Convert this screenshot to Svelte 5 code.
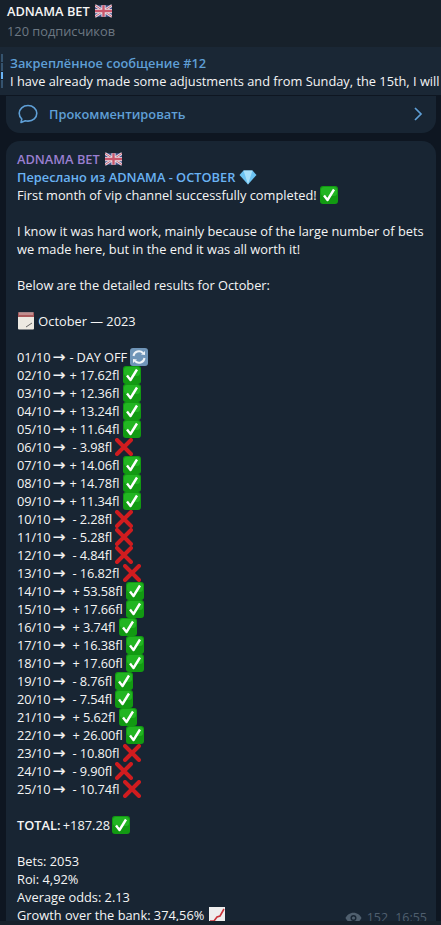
<script>
  const rows = [
    ['01/10', '- DAY OFF', 'sync'],
    ['02/10', '+ 17.62fl', 'ok'],
    ['03/10', '+ 12.36fl', 'ok'],
    ['04/10', '+ 13.24fl', 'ok'],
    ['05/10', '+ 11.64fl', 'ok'],
    ['06/10', ' - 3.98fl', 'no'],
    ['07/10', '+ 14.06fl', 'ok'],
    ['08/10', '+ 14.78fl', 'ok'],
    ['09/10', '+ 11.34fl', 'ok'],
    ['10/10', ' - 2.28fl', 'no'],
    ['11/10', ' - 5.28fl', 'no'],
    ['12/10', ' - 4.84fl', 'no'],
    ['13/10', ' - 16.82fl', 'no'],
    ['14/10', ' + 53.58fl', 'ok'],
    ['15/10', ' + 17.66fl', 'ok'],
    ['16/10', ' + 3.74fl', 'ok'],
    ['17/10', ' + 16.38fl', 'ok'],
    ['18/10', ' + 17.60fl', 'ok'],
    ['19/10', ' - 8.76fl', 'ok'],
    ['20/10', ' - 7.54fl', 'ok'],
    ['21/10', ' + 5.62fl', 'ok'],
    ['22/10', ' + 26.00fl', 'ok'],
    ['23/10', ' - 10.80fl', 'no'],
    ['24/10', ' - 9.90fl', 'no'],
    ['25/10', ' - 10.74fl', 'no']
  ];
</script>

{#snippet flag()}
  <svg class="emoji flag" viewBox="0 0 18 14">
    <rect y="1" width="18" height="12" rx="1" fill="#4a5590" />
    <path d="M0 1 18 13M18 1 0 13" stroke="#e4dfe6" stroke-width="3" />
    <path d="M0 1 18 13M18 1 0 13" stroke="#c9566c" stroke-width="1" />
    <path d="M9 1V13M0 7H18" stroke="#e4dfe6" stroke-width="4.500" />
    <path d="M9 1V13M0 7H18" stroke="#c9566c" stroke-width="2.500" />
  </svg>
{/snippet}

{#snippet ok()}
  <svg class="emoji" viewBox="0 0 18 18">
    <rect width="18" height="18" rx="3" fill="#129a12" />
    <rect x="1" y="1" width="16" height="9" rx="3" fill="#22b522" />
    <path d="M4 9.500 7.500 14 14 3.500" fill="none" stroke="#fff" stroke-width="2.400" stroke-linejoin="round" />
  </svg>
{/snippet}

{#snippet no()}
  <svg class="emoji" viewBox="0 0 18 18">
    <path d="M2 2 16 16M16 2 2 16" stroke="#d01c1f" stroke-width="4" stroke-linecap="round" />
  </svg>
{/snippet}

{#snippet sync()}
  <svg class="emoji" viewBox="0 0 18 18">
    <rect width="18" height="18" rx="3" fill="#6f95b8" />
    <path d="M3.500 8A5.500 5.500 0 0 1 13 5M14.500 10A5.500 5.500 0 0 1 5 13" fill="none" stroke="#eef3f7" stroke-width="2" />
    <path d="M11 6.500 15 7 15 3ZM7 11.500 3 11 3 15Z" fill="#eef3f7" />
  </svg>
{/snippet}

{#snippet calendar()}
  <svg class="emoji" viewBox="0 0 18 18">
    <rect x="1" y="0.500" width="16" height="17" rx="1" fill="#ece9e2" />
    <rect x="1" y="0.500" width="16" height="4.500" fill="#a9595b" />
    <path d="M3 0.500V3M5 0.500V3M7 0.500V3M9 0.500V3M11 0.500V3M13 0.500V3M15 0.500V3" stroke="#eee" stroke-width="0.700" />
    <path d="M9 15 15 11" stroke="#666" stroke-width="1" />
  </svg>
{/snippet}

{#snippet gem()}
  <svg class="emoji" viewBox="0 0 18 18">
    <path d="M4.500 2.500H13.500L17.500 7 9 16.500 0.500 7Z" fill="#6cc3f2" />
    <path d="M4.500 2.500H13.500L12 7H6ZM6 7H12L9 16.500Z" fill="#a7e0fb" />
  </svg>
{/snippet}

{#snippet chart()}
  <svg class="emoji" viewBox="0 0 18 18">
    <rect x="1" y="1" width="16" height="16" fill="#eee" />
    <path d="M2 15H6L9 11 12 10 16 3" fill="none" stroke="#c9343a" stroke-width="1.600" />
  </svg>
{/snippet}

<div class="page">
  <header class="top">
    <div class="title">ADNAMA BET {@render flag()}</div>
    <div class="subs">120 подписчиков</div>
  </header>

  <div class="pinned">
    <div class="pin-bars"><i></i><i></i><i class="on"></i><i></i></div>
    <div class="pin-text">
      <div class="pin-title">Закреплённое сообщение #12</div>
      <div class="pin-line">I have already made some adjustments and from Sunday, the 15th, I will</div>
    </div>
  </div>

  <div class="comment">
    <svg class="comment-icon" viewBox="0 0 20 20">
      <path d="M10 1.500C5 1.500 1.200 5 1.200 9.300 1.200 11.500 2.200 13.500 3.800 15L3 18.500 7.300 16.700C8.200 17 9 17.100 10 17.100 15 17.100 18.800 13.600 18.800 9.300S15 1.500 10 1.500Z" fill="none" stroke="currentColor" stroke-width="1.600" stroke-linejoin="round" />
    </svg>
    <span>Прокомментировать</span>
    <svg class="chev" viewBox="0 0 10 16">
      <path d="M2 2 8 8 2 14" fill="none" stroke="currentColor" stroke-width="1.700" />
    </svg>
  </div>

  <article class="bubble">
    <div class="line name">ADNAMA BET {@render flag()}</div>
    <div class="line fwd">Переслано из ADNAMA - OCTOBER {@render gem()}</div>
    <div class="line">First month of vip channel successfully completed! {@render ok()}</div>
    <div class="line blank"></div>
    <div class="line">I know it was hard work, mainly because of the large number of bets</div>
    <div class="line">we made here, but in the end it was all worth it!</div>
    <div class="line blank"></div>
    <div class="line">Below are the detailed results for October:</div>
    <div class="line blank"></div>
    <div class="line">{@render calendar()} October — 2023</div>
    <div class="line blank"></div>
    {#each rows as [date, result, mark]}
      <div class="line row">{date} <span class="arrow">→</span> {result} {#if mark === 'ok'}{@render ok()}{:else if mark === 'no'}{@render no()}{:else}{@render sync()}{/if}</div>
    {/each}
    <div class="line blank"></div>
    <div class="line total"><b>TOTAL:</b> +187.28 {@render ok()}</div>
    <div class="line blank"></div>
    <div class="line">Bets: 2053</div>
    <div class="line">Roi: 4,92%</div>
    <div class="line">Average odds: 2.13</div>
    <div class="line">Growth over the bank: 374,56% {@render chart()}</div>
    <div class="meta">
      <svg class="eye" viewBox="0 0 18 12">
        <path d="M9 0.500C5 0.500 2 3 0.500 6 2 9 5 11.500 9 11.500S16 9 17.500 6C16 3 13 0.500 9 0.500Z" fill="currentColor" />
        <circle cx="9" cy="6" r="3.200" fill="#182533" />
        <circle cx="9" cy="6" r="1.700" fill="currentColor" />
      </svg>
      <span>152</span><span>16:55</span>
    </div>
  </article>

  <div class="footer"></div>
</div>

<style>
  :global(body) {
    margin: 0;
    background: #0e1621;
  }

  .page {
    width: 441px;
    height: 925px;
    overflow: hidden;
    display: flex;
    flex-direction: column;
    font-family: "Open Sans", "Noto Sans", sans-serif;
    font-size: 12.8px;
    color: #f5f5f5;
    background: #0e1621;
    position: relative;
  }

  .top {
    height: 47px;
    flex: none;
    box-sizing: border-box;
    padding: 1px 7px 0;
    background: #17212b;
  }

  .title {
    font-weight: 600;
    line-height: 20px;
    height: 20px;
  }

  .subs {
    line-height: 20px;
    color: #6d7883;
  }

  .pinned {
    height: 49px;
    flex: none;
    box-sizing: border-box;
    display: flex;
    gap: 7px;
    padding: 7px 0 0 1px;
    background: #1a2735;
    border-bottom: 1px solid #0e1621;
    white-space: nowrap;
    overflow: hidden;
  }

  .pin-bars {
    display: flex;
    flex-direction: column;
    gap: 1px;
    width: 2px;
    height: 34px;
    flex: none;
  }

  .pin-bars i {
    flex: 1;
    background: #35536e;
  }

  .pin-bars i.on {
    background: #6ab3f3;
  }

  .pin-title {
    color: #5f9fd6;
    font-weight: 600;
    line-height: 18px;
  }

  .pin-line {
    line-height: 18px;
  }

  .comment {
    height: 37px;
    flex: none;
    box-sizing: border-box;
    padding: 0 13px 2px 12px;
    margin: 0 5px 0 6px;
    display: flex;
    align-items: center;
    gap: 11px;
    background: #182533;
    border-radius: 0 0 14px 14px;
    color: #5f9fd6;
    font-weight: 600;
  }

  .comment-icon {
    width: 20px;
    height: 20px;
  }

  .chev {
    width: 10px;
    height: 16px;
    margin-left: auto;
  }

  .bubble {
    margin: 8px 5px 0 6px;
    padding: 9px 11px 0;
    background: #182533;
    border-radius: 14px 14px 0 0;
    flex: none;
    height: 800px;
    position: relative;
  }

  .line {
    height: 18px;
    line-height: 18px;
    white-space: pre;
  }

  .row {
    letter-spacing: -0.1px;
  }

  .name {
    color: #9a7fd0;
    font-weight: 600;
  }

  .fwd {
    color: #6ab3f3;
    font-weight: 600;
  }

  .arrow {
    font-family: "DejaVu Sans", sans-serif;
    font-size: 15px;
    line-height: 0;
    margin: 0 1px 0 -1px;
    -webkit-text-stroke: 0.3px currentColor;
  }

  .total {
    word-spacing: -1px;
  }

  b {
    font-weight: 600;
  }

  .emoji {
    width: 18px;
    height: 18px;
    vertical-align: -4px;
  }

  .flag {
    width: 17px;
    margin-left: 2px;
  }

  .meta {
    position: absolute;
    right: 9px;
    top: 768px;
    display: flex;
    align-items: center;
    gap: 7px;
    color: #4f5f6e;
    font-size: 12.5px;
    line-height: 18px;
  }

  .eye {
    width: 17px;
    height: 12px;
    margin-right: -2px;
  }

  .footer {
    position: absolute;
    left: 0;
    right: 0;
    bottom: 0;
    height: 4px;
    background: #17212b;
  }
</style>
